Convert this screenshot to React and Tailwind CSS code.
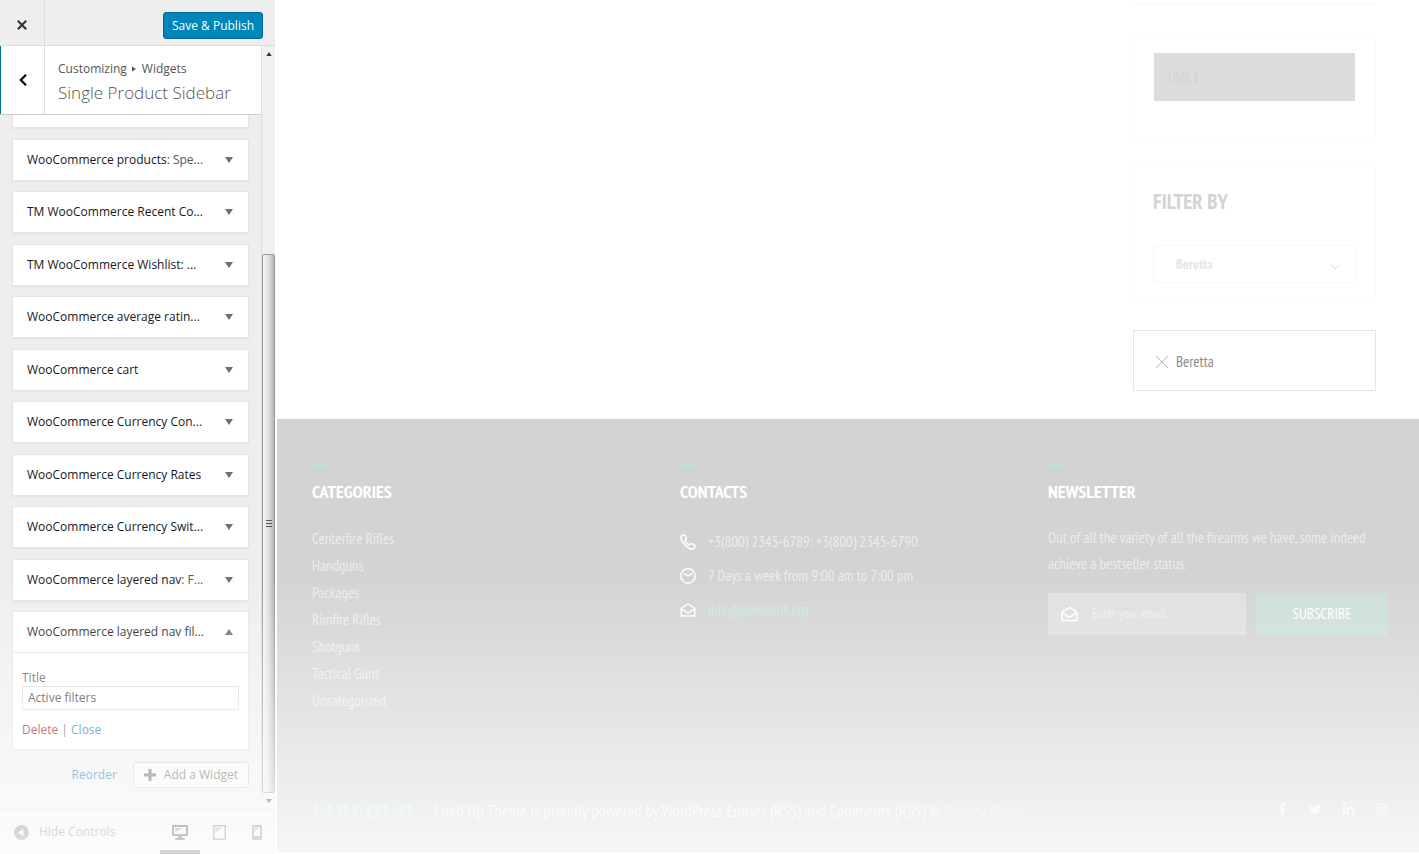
import React from "react";
import { FaFacebookF, FaTwitter, FaLinkedinIn, FaInstagram } from "react-icons/fa";

const widgets = [
  { name: "WooCommerce products", note: ": Spe..." },
  { name: "TM WooCommerce Recent Co..." },
  { name: "TM WooCommerce Wishlist: ..." },
  { name: "WooCommerce average ratin..." },
  { name: "WooCommerce cart" },
  { name: "WooCommerce Currency Con..." },
  { name: "WooCommerce Currency Rates" },
  { name: "WooCommerce Currency Swit..." },
  { name: "WooCommerce layered nav", note: ": F..." },
];

const categories = [
  "Centerfire Rifles",
  "Handguns",
  "Packages",
  "Rimfire Rifles",
  "Shotguns",
  "Tactical Guns",
  "Uncategorized",
];

function Triangle({ up = false, className = "" }) {
  return (
    <svg viewBox="0 0 10 6" className={className} aria-hidden="true">
      <path d={up ? "M1 6h8L5 0z" : "M1 0h8L5 6z"} fill="currentColor" />
    </svg>
  );
}

function WidgetRow({ name, note }) {
  return (
    <button
      type="button"
      className="flex h-[42px] w-full items-center justify-between border border-[#e5e5e5] bg-white pr-3.5 pl-3.5 text-left text-xs font-medium whitespace-nowrap text-[#15191d] shadow-xs"
    >
      <span>
        {name}
        {note && <span className="font-normal text-[#555]">{note}</span>}
      </span>
      <Triangle className="h-1.5 w-2.5 shrink-0 text-[#6c7075]" />
    </button>
  );
}

function Envelope({ className }) {
  return (
    <svg viewBox="0 0 18 16" fill="none" stroke="currentColor" strokeWidth="1.6" strokeLinejoin="round" className={className} aria-hidden="true">
      <path d="M1.2 6 9 1.1 16.8 6v8.8H1.2z" />
      <path d="m1.4 6.4 5.2 3.8q2.4 1.6 4.800 0l5.200-3.800" />
    </svg>
  );
}

function Chevron({ className }) {
  return (
    <svg viewBox="0 0 10 6" fill="none" stroke="currentColor" className={className} aria-hidden="true">
      <path d="m.5.5 4.500 4.500L9.500.5" />
    </svg>
  );
}

function ScrollBar() {
  return (
    <div className="flex w-3.5 shrink-0 flex-col border-l border-[#ddd] bg-[#f0f0f0]" aria-hidden="true">
      <div className="flex h-4 shrink-0 items-center justify-center">
        <Triangle up className="h-1 w-2 text-[#333]" />
      </div>
      <div className="grow-[195]" />
      <div className="flex grow-[537] items-center justify-center rounded-xs border border-[#999] bg-linear-to-r from-[#f5f5f5] via-[#dedede] to-[#b4b4b4]">
        <svg viewBox="0 0 6 7" className="h-[7px] w-1.5" stroke="#555">
          <path d="M0 .5h6M0 3.500h6M0 6.500h6" />
        </svg>
      </div>
      <div className="flex h-4 shrink-0 items-center justify-center">
        <Triangle className="h-1 w-2 text-[#333]" />
      </div>
    </div>
  );
}

function Customizer() {
  return (
    <aside className="flex w-[275px] shrink-0 flex-col bg-[#eee] font-['Open_Sans','Noto_Sans',sans-serif] text-xs">
      <header className="flex h-[46px] shrink-0 items-center justify-between border-b border-[#ddd] pr-3">
        <button type="button" aria-label="Close customizer" className="flex h-full w-[45px] items-center justify-center border-r border-[#ddd] text-[#32373c]">
          <svg viewBox="0 0 10 10" className="mt-1 size-2.5" stroke="currentColor" strokeWidth="2.200" aria-hidden="true">
            <path d="m.8.8 8.400 8.400M9.200.8.8 9.200" />
          </svg>
        </button>
        <button type="button" className="mt-1.5 h-[27px] rounded-[3px] border border-[#006799] bg-[#0085ba] px-2 text-xs font-medium whitespace-nowrap text-white">
          Save &amp; Publish
        </button>
      </header>

      <div className="flex grow">
        <div className="flex min-w-0 grow flex-col">
          <div className="flex h-[69px] shrink-0 border-b border-[#ccc] bg-white">
            <button type="button" aria-label="Back" className="flex w-[45px] items-center justify-center border-r border-l border-r-[#ddd] border-l-[#0073aa] text-black">
              <svg viewBox="0 0 8 12" className="h-3 w-2" fill="none" stroke="currentColor" strokeWidth="2.200" aria-hidden="true">
                <path d="M7 .8 1.800 6 7 11.200" />
              </svg>
            </button>
            <div className="flex flex-col justify-center pt-1.5 pl-[13px] whitespace-nowrap text-[#555]">
              <p className="flex items-center gap-[5px] text-xs leading-5">
                Customizing
                <svg viewBox="0 0 5 6" className="h-1.5 w-[5px]" aria-hidden="true"><path d="M0 .5v5l4-2.500z" fill="currentColor" /></svg>
                Widgets
              </p>
              <h1 className="text-[17px] leading-7 font-light">Single Product Sidebar</h1>
            </div>
          </div>

          <div className="flex grow flex-col px-3">
            <div className="h-[13px] shrink-0 border border-t-0 border-[#e5e5e5] bg-white shadow-xs" />

            <div className="flex grow flex-col justify-between pt-[11px]">
              {widgets.map((w) => (
                <WidgetRow key={w.name} {...w} />
              ))}
              <section className="border border-[#e5e5e5] bg-white shadow-xs">
                <button type="button" className="flex h-[41px] w-full items-center justify-between border-b border-[#e5e5e5] pr-3.5 pl-3.5 font-medium whitespace-nowrap text-[#15191d]">
                  WooCommerce layered nav fil...
                  <Triangle up className="h-1.5 w-2.5 shrink-0 text-[#6c7075]" />
                </button>
                <div className="px-[9px] pt-4 pb-[9px]">
                  <label htmlFor="widget-title" className="block text-xs leading-[17px] text-[#555]">Title</label>
                  <input id="widget-title" defaultValue="Active filters" className="block h-6 w-full border border-[#ddd] px-[5px] text-xs text-[#32373c]" />
                  <p className="mt-2.5 text-xs leading-5 text-[#555]">
                    <a href="#delete" className="text-[#a00020]">Delete</a> | <a href="#close" className="text-[#0073aa]">Close</a>
                  </p>
                </div>
              </section>
            </div>

            <div className="flex shrink-0 items-center justify-end gap-4 pt-3 pb-[21px]">
              <a href="#reorder" className="text-xs text-[#0073aa]">Reorder</a>
              <button type="button" className="flex h-[26px] items-center gap-2 rounded-[3px] border border-[#ccc] bg-[#f7f7f7] px-2.5 text-xs text-[#555]">
                <svg viewBox="0 0 12 12" className="size-3" aria-hidden="true"><path d="M4.500 0h3v4.500H12v3H7.500V12h-3V7.500H0v-3h4.500z" fill="currentColor" /></svg>
                Add a Widget
              </button>
            </div>
          </div>
        </div>
        <ScrollBar />
      </div>

      <footer className="flex h-[45px] shrink-0 justify-between border-t border-[#ddd] pr-[13px] pl-3.5 text-[#666]">
        <button type="button" className="flex items-center gap-2.5 text-xs">
          <svg viewBox="0 0 15 15" className="size-[15px]" aria-hidden="true">
            <path fillRule="evenodd" d="M7.500 0a7.500 7.500 0 1 1 0 15 7.500 7.500 0 0 1 0-15zM9.500 3.800 4 7.500l5.500 3.700z" fill="currentColor" />
          </svg>
          Hide Controls
        </button>
        <div className="flex">
          <button type="button" aria-label="Desktop preview" className="flex w-10 items-center justify-center border-t-4 border-b-4 border-t-transparent border-b-[#333] text-[#222]">
            <svg viewBox="0 0 16 15" className="h-[15px] w-4" fill="currentColor" aria-hidden="true">
              <path fillRule="evenodd" d="M0 0h16v11h-6v2h2.500v2h-9v-2H6v-2H0zM2 2v7h12V2z" />
              <path d="M3 3h8L3 7z" opacity=".6" />
            </svg>
          </button>
          <button type="button" aria-label="Tablet preview" className="flex w-[38px] items-center justify-center">
            <svg viewBox="0 0 13 15" className="h-[15px] w-[13px]" fill="currentColor" aria-hidden="true">
              <path fillRule="evenodd" d="M0 0h13v15H0zM1.500 1.500v12h10v-12z" />
              <path d="M2.500 2.500h7l-7 5z" opacity=".6" />
            </svg>
          </button>
          <button type="button" aria-label="Mobile preview" className="flex items-center justify-end pl-3.5">
            <svg viewBox="0 0 10 15" className="h-[15px] w-2.5" fill="currentColor" aria-hidden="true">
              <path fillRule="evenodd" d="M1 0h8l1 1v13l-1 1H1l-1-1V1zM1.800 2v9h6.400V2z" />
              <path d="M2.500 2.500h4.500l-4.500 5z" opacity=".6" />
            </svg>
          </button>
        </div>
      </footer>
    </aside>
  );
}

function Column({ title, children }) {
  return (
    <section>
      <div className="h-[3px] w-4 bg-[#c4e0d4]" />
      <h2 className="mt-[11px] mb-[19px] text-lg leading-7 font-bold text-white">{title}</h2>
      {children}
    </section>
  );
}

function Preview() {
  return (
    <main className="flex min-w-0 grow flex-col pb-0.5 font-['PT_Sans_Narrow','Roboto_Condensed','Liberation_Sans_Narrow','Liberation_Sans',sans-serif]">
      <div className="mr-[43px] mb-7 flex w-[243px] flex-col gap-7 self-end">
        <div className="h-[5px] border-b border-[#f8f8f8]" />
        <div className="border border-[#fafafa] px-5 pt-[19px] pb-9">
          <div className="relative">
            <select aria-label="Currency" className="block h-12 w-full appearance-none bg-[#dcdcdc] px-3.5 text-sm text-[#d3d3d3]">
              <option>USD, $</option>
            </select>
            <Chevron className="pointer-events-none absolute top-5 right-2 h-1.5 w-2.5 text-[#d5d5d5]" />
          </div>
        </div>
        <div className="border border-[#fafafa] px-[19px] pt-5 pb-[18px]">
          <h2 className="text-[21px] leading-[30px] font-bold text-[#d3d3d3]">FILTER BY</h2>
          <div className="relative mt-7">
            <select aria-label="Filter by brand" className="block h-[38px] w-full appearance-none border border-[#f8f8f8] bg-white px-[22px] text-sm font-bold text-[#e6e6e6]">
              <option>Beretta</option>
            </select>
            <Chevron className="pointer-events-none absolute top-[19px] right-4 h-1.5 w-2.5 text-[#d8d8d8]" />
          </div>
        </div>
        <div className="border border-[#e5e5e5] px-[22px] pt-[21px] pb-[18px]">
          <a href="#remove-beretta" className="flex items-center gap-2 text-[15px] leading-5 text-[#8c8c8c]">
            <svg viewBox="0 0 12 12" className="size-3" stroke="#b4b4b4" aria-hidden="true"><path d="m0 0 12 12M12 0 0 12" /></svg>
            Beretta
          </a>
        </div>
      </div>

      <footer className="flex grow flex-col justify-between bg-[#d3d3d3] pt-[45px] pr-[31px] pb-[29px] pl-[35px]">
        <div className="grid grid-cols-3 gap-7">
          <Column title="CATEGORIES">
            <ul className="text-[15px] leading-[27px] text-[#ececec]">
              {categories.map((c) => (
                <li key={c}><a href="#category">{c}</a></li>
              ))}
            </ul>
          </Column>
          <Column title="CONTACTS">
            <ul className="text-[15px] leading-[34px] text-[#ececec]">
              <li className="flex items-center gap-3">
                <svg viewBox="0 0 16 16" className="size-4 text-white" fill="none" stroke="currentColor" strokeWidth="1.500" strokeLinejoin="round" aria-hidden="true">
                  <path d="M3.500.8 1.500 2C.3 3 .8 5 2 7.200c1.600 2.900 4 5.300 6.900 6.900 2.200 1.200 4.200 1.500 5.200.3l1.100-1.700c.2-.5.1-.9-.3-1.200L11.700 9.600c-.5-.2-.8-.1-1.100.2L9.300 11C7.500 10.200 5.700 8.300 5 6.600l1.200-1.400c.3-.3.300-.7.100-1.100L4.700 1.100c-.3-.4-.8-.5-1.200-.3z" />
                </svg>
                +3(800) 2345-6789: +3(800) 2345-6790
              </li>
              <li className="flex items-center gap-3">
                <svg viewBox="0 0 16 16" className="size-4 text-white" fill="none" stroke="currentColor" strokeWidth="1.500" aria-hidden="true">
                  <circle cx="8" cy="8" r="7.200" />
                  <path d="m4 5.700 4 2.200L12.300 5.500" />
                </svg>
                7 Days a week from 9:00 am to 7:00 pm
              </li>
              <li className="flex items-center gap-3">
                <Envelope className="h-3.5 w-4 text-white" />
                <a href="#mail" className="text-[#c8ebdd]">info@demolink.org</a>
              </li>
            </ul>
          </Column>
          <Column title="NEWSLETTER">
            <p className="text-[15px] leading-[26px] text-[#ececec]">
              Out of all the variety of all the firearms we have, some indeed achieve a bestseller status.
            </p>
            <form className="mt-4 flex gap-2.5">
              <label className="flex h-[42px] min-w-0 grow items-center gap-3.5 bg-[#dfdfdf] pl-[13px]">
                <Envelope className="h-4 w-[17px] shrink-0 text-white" />
                <input type="email" aria-label="Email address" placeholder="Enter your email" className="w-full min-w-0 bg-transparent text-[13px] placeholder:text-[#efefef]" />
              </label>
              <button type="button" className="h-[42px] w-[132px] shrink-0 bg-[#cbdfd7] text-[15px] text-white">SUBSCRIBE</button>
            </form>
          </Column>
        </div>
        <div className="flex items-center justify-between whitespace-nowrap text-[#f2f2f2]">
          <div className="flex items-center gap-[22px]">
            <strong className="font-['DejaVu_Serif',serif] text-[19px] leading-6 font-bold text-[#d0eadf]">FIREDUP</strong>
            <p className="text-[17px] leading-6">
              Fired Up Theme is proudly powered by WordPress Entries (RSS) and Comments (RSS) © <a href="#privacy" className="text-[#d6efe4]">Privacy Policy</a>.
            </p>
          </div>
          <nav className="flex items-center gap-5 pb-1 text-[13px]" aria-label="Social">
            <a href="#facebook" aria-label="Facebook"><FaFacebookF /></a>
            <a href="#twitter" aria-label="Twitter"><FaTwitter /></a>
            <a href="#linkedin" aria-label="LinkedIn"><FaLinkedinIn /></a>
            <a href="#instagram" aria-label="Instagram"><FaInstagram /></a>
          </nav>
        </div>
      </footer>
    </main>
  );
}

export default function App() {
  return (
    <div className="relative flex min-h-screen gap-0.5 bg-white">
      <Customizer />
      <Preview />
      <div className="pointer-events-none absolute inset-x-0 bottom-0 h-[280px] bg-linear-to-b from-white/0 to-white/80" />
    </div>
  );
}
